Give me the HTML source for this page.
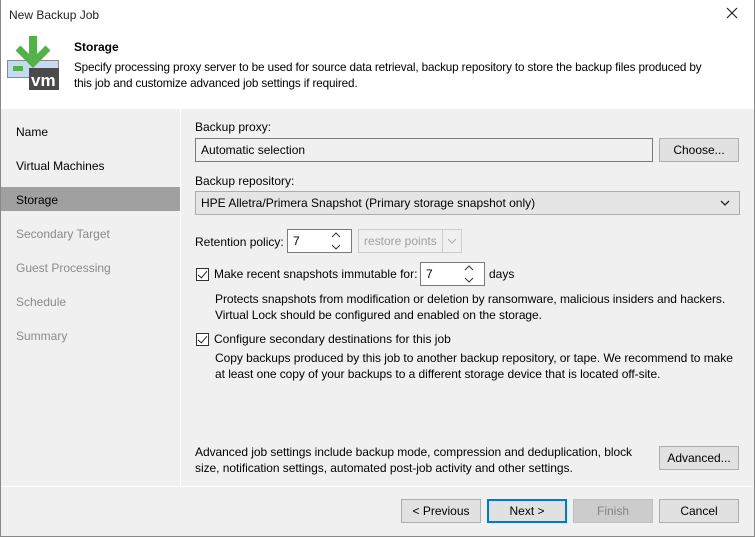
<!DOCTYPE html>
<html><head><meta charset="utf-8"><style>
*{box-sizing:border-box;margin:0;padding:0}
body{width:755px;height:537px;background:#f0f0f0;font-family:"Liberation Sans",sans-serif;font-size:12px;color:#000;position:relative;overflow:hidden}
.a{position:absolute;white-space:nowrap}
.win{position:absolute;left:0;top:0;width:755px;height:537px;border:1px solid #888;border-top:none}
.btn{position:absolute;background:#e1e1e1;border:1px solid #adadad;text-align:center;line-height:22px;height:24px}
.inp{position:absolute;background:#fff;border:1px solid #7a7a7a;height:24px;line-height:22px;padding-left:5px}
.cb{position:absolute;width:13px;height:13px;border:1px solid #333;background:#fff}
.cb:after{content:"";position:absolute;left:3px;top:0px;width:4px;height:8px;border:solid #222;border-width:0 1.5px 1.5px 0;transform:rotate(40deg)}
.side{position:absolute;left:16px;color:#000}
.dis{color:#8a8a8a}
</style></head><body>
<div class="a" style="left:0;top:0;width:755px;height:109px;background:#fff"></div>
<div class="a" style="left:9px;top:8px;color:#222">New Backup Job</div>
<svg class="a" style="left:725px;top:6px" width="14" height="14"><path d="M2 2L12 12M12 2L2 12" stroke="#222" stroke-width="1.2"/></svg>
<svg class="a" style="left:0;top:30px" width="70" height="64">
<rect x="7.5" y="30.5" width="51" height="17" fill="#c5daf0" stroke="#888"/>
<rect x="13" y="36" width="10" height="5" fill="#52b248"/>
<rect x="29" y="38" width="30" height="22" fill="#4a4a4a"/>
<text x="31" y="56" font-family="Liberation Sans" font-weight="bold" font-size="17" fill="#fff">vm</text>
<rect x="29" y="6" width="8" height="22" fill="#52b248"/>
<path d="M18 18L33 33L48 18" stroke="#52b248" stroke-width="7" fill="none"/>
</svg>
<div class="a" style="left:74px;top:40px;font-weight:bold">Storage</div>
<div class="a" style="left:74px;top:60px;line-height:16px;font-size:11.7px;letter-spacing:-0.12px">Specify processing proxy server to be used for source data retrieval, backup repository to store the backup files produced by<br>this job and customize advanced job settings if required.</div>
<div class="a" style="left:180px;top:109px;width:1px;height:377px;background:#fff"></div>
<div class="side" style="top:125px">Name</div>
<div class="side" style="top:159px">Virtual Machines</div>
<div class="a" style="left:1px;top:187px;width:179px;height:24px;background:#a0a0a0"></div>
<div class="side" style="top:193px">Storage</div>
<div class="side dis" style="top:227px">Secondary Target</div>
<div class="side dis" style="top:261px">Guest Processing</div>
<div class="side dis" style="top:295px">Schedule</div>
<div class="side dis" style="top:329px">Summary</div>

<div class="a" style="left:195px;top:120px">Backup proxy:</div>
<div class="inp" style="left:195px;top:138px;width:458px;background:#f0f0f0">Automatic selection</div>
<div class="btn" style="left:659px;top:138px;width:80px">Choose...</div>
<div class="a" style="left:195px;top:174px">Backup repository:</div>
<div class="inp" style="left:195px;top:191px;width:545px;background:#e5e5e5;border-color:#adadad">HPE Alletra/Primera Snapshot (Primary storage snapshot only)</div>
<svg class="a" style="left:720px;top:200px" width="10" height="6"><path d="M1 1l4 4l4-4" stroke="#222" stroke-width="1.3" fill="none"/></svg>
<div class="a" style="left:195px;top:235px">Retention policy:</div>
<div class="inp" style="left:287px;top:229px;width:65px">7</div>
<svg class="a" style="left:330px;top:231px" width="12" height="20"><path d="M2 6l4-4l4 4M2 14l4 4l4-4" stroke="#333" fill="none"/></svg>
<div class="inp" style="left:358px;top:229px;width:104px;border-color:#ccc;background:#f0f0f0;color:#a0a0a0">restore points</div>
<div class="a" style="left:442px;top:230px;width:1px;height:22px;background:#ccc"></div>
<svg class="a" style="left:447px;top:238px" width="10" height="6"><path d="M1 1l4 4l4-4" stroke="#aaa" fill="none"/></svg>
<div class="cb" style="left:196px;top:268px"></div>
<div class="a" style="left:214px;top:267px">Make recent snapshots immutable for:</div>
<div class="inp" style="left:420px;top:262px;width:65px">7</div>
<svg class="a" style="left:463px;top:264px" width="12" height="20"><path d="M2 6l4-4l4 4M2 14l4 4l4-4" stroke="#333" fill="none"/></svg>
<div class="a" style="left:489px;top:267px">days</div>
<div class="a" style="left:215px;top:291px;line-height:16px;letter-spacing:-0.05px">Protects snapshots from modification or deletion by ransomware, malicious insiders and hackers.<br>Virtual Lock should be configured and enabled on the storage.</div>
<div class="cb" style="left:196px;top:333px"></div>
<div class="a" style="left:214px;top:332px">Configure secondary destinations for this job</div>
<div class="a" style="left:215px;top:350px;line-height:16px;letter-spacing:-0.05px">Copy backups produced by this job to another backup repository, or tape. We recommend to make<br>at least one copy of your backups to a different storage device that is located off-site.</div>
<div class="a" style="left:195px;top:444px;line-height:16px;letter-spacing:-0.05px">Advanced job settings include backup mode, compression and deduplication, block<br>size, notification settings, automated post-job activity and other settings.</div>
<div class="btn" style="left:659px;top:446px;width:80px">Advanced...</div>
<div class="a" style="left:1px;top:486px;width:753px;height:1px;background:#fff"></div>
<div class="btn" style="left:401px;top:499px;width:80px">&lt; Previous</div>
<div class="btn" style="left:487px;top:499px;width:80px;border:2px solid #0078d7;line-height:20px">Next &gt;</div>
<div class="btn" style="left:573px;top:499px;width:80px;background:#ccc;border-color:#bfbfbf;color:#838383">Finish</div>
<div class="btn" style="left:659px;top:499px;width:80px">Cancel</div>
<div class="win"></div>
</body></html>
